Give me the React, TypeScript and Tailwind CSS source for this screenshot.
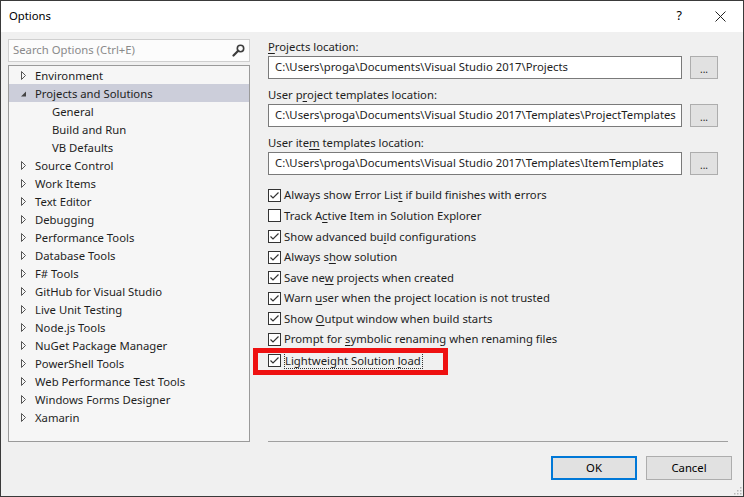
import React from 'react';

type TreeRow = {
  label: string;
  kind: 'collapsed' | 'expanded' | 'child';
  selected?: boolean;
};

const tree: TreeRow[] = [
  { label: 'Environment', kind: 'collapsed' },
  { label: 'Projects and Solutions', kind: 'expanded', selected: true },
  { label: 'General', kind: 'child' },
  { label: 'Build and Run', kind: 'child' },
  { label: 'VB Defaults', kind: 'child' },
  { label: 'Source Control', kind: 'collapsed' },
  { label: 'Work Items', kind: 'collapsed' },
  { label: 'Text Editor', kind: 'collapsed' },
  { label: 'Debugging', kind: 'collapsed' },
  { label: 'Performance Tools', kind: 'collapsed' },
  { label: 'Database Tools', kind: 'collapsed' },
  { label: 'F# Tools', kind: 'collapsed' },
  { label: 'GitHub for Visual Studio', kind: 'collapsed' },
  { label: 'Live Unit Testing', kind: 'collapsed' },
  { label: 'Node.js Tools', kind: 'collapsed' },
  { label: 'NuGet Package Manager', kind: 'collapsed' },
  { label: 'PowerShell Tools', kind: 'collapsed' },
  { label: 'Web Performance Test Tools', kind: 'collapsed' },
  { label: 'Windows Forms Designer', kind: 'collapsed' },
  { label: 'Xamarin', kind: 'collapsed' },
];

// label split as [before, accessKey, after]
const options: { parts: [string, string, string]; checked: boolean }[] = [
  { parts: ['Always show Error Lis', 't', ' if build finishes with errors'], checked: true },
  { parts: ['Track A', 'c', 'tive Item in Solution Explorer'], checked: false },
  { parts: ['Show advanced bu', 'i', 'ld configurations'], checked: true },
  { parts: ['Always s', 'h', 'ow solution'], checked: true },
  { parts: ['Save ne', 'w', ' projects when created'], checked: true },
  { parts: ['Warn ', 'u', 'ser when the project location is not trusted'], checked: true },
  { parts: ['Show ', 'O', 'utput window when build starts'], checked: true },
  { parts: ['Prompt for ', 's', 'ymbolic renaming when renaming files'], checked: true },
];

const locations: { label: [string, string, string]; value: string }[] = [
  { label: ['', 'P', 'rojects location:'], value: 'C:\\Users\\proga\\Documents\\Visual Studio 2017\\Projects' },
  { label: ['User p', 'r', 'oject templates location:'], value: 'C:\\Users\\proga\\Documents\\Visual Studio 2017\\Templates\\ProjectTemplates' },
  { label: ['User ite', 'm', ' templates location:'], value: 'C:\\Users\\proga\\Documents\\Visual Studio 2017\\Templates\\ItemTemplates' },
];

function Expander({ kind }: { kind: TreeRow['kind'] }) {
  if (kind === 'child') return null;
  if (kind === 'expanded') {
    return (
      <svg width="7" height="9" viewBox="0 0 7 9" className="shrink-0">
        <path d="M6 2.5 L6 7.5 L1 7.5 Z" fill="#444" />
      </svg>
    );
  }
  return (
    <svg width="7" height="9" viewBox="0 0 7 9" className="shrink-0">
      <path d="M1.5 0.5 L5.5 4.5 L1.5 8.5 Z" fill="none" stroke="#555" strokeWidth="1" />
    </svg>
  );
}

function CheckBox({ checked }: { checked: boolean }) {
  return (
    <span className="w-[13px] h-[13px] border border-[#333] bg-white shrink-0 flex items-center justify-center">
      {checked && (
        <svg width="11" height="11" viewBox="0 0 11 11">
          <path d="M1.5 5.5 L4 8 L9.5 2.5" fill="none" stroke="#333" strokeWidth="1.2" />
        </svg>
      )}
    </span>
  );
}

function AccessLabel({ parts }: { parts: [string, string, string] }) {
  return (
    <>
      {parts[0]}
      <span className="underline underline-offset-2">{parts[1]}</span>
      {parts[2]}
    </>
  );
}

export default function App() {
  return (
    <div className="w-[744px] h-[497px] border border-[#3a3a3a] bg-[#f0f0f0] flex flex-col text-[11.3px] text-[#1e1e1e] font-['Noto_Sans',sans-serif] relative overflow-hidden">
      {/* Title bar */}
      <div className="h-[31px] bg-white flex items-center shrink-0">
        <span className="pl-[8px] text-black">Options</span>
        <span className="ml-auto mr-[33px] text-[12.5px] text-black">?</span>
        <svg width="11" height="11" viewBox="0 0 11 11" className="mr-[17px]">
          <path d="M0.5 0.5 L10.5 10.5 M10.5 0.5 L0.5 10.5" stroke="#222" strokeWidth="1" />
        </svg>
      </div>

      {/* Body */}
      <div className="flex h-[411px] shrink-0">
        {/* Left column */}
        <div className="w-[249px] pl-[7px] pt-[7px] flex flex-col shrink-0">
          <div className="h-[23px] border border-[#cfcfcf] bg-[#fcfcfc] flex items-center pl-[4px] pr-[4px]">
            <span className="text-[#8a8a8a]">Search Options (Ctrl+E)</span>
            <svg width="13" height="13" viewBox="0 0 13 13" className="ml-auto">
              <circle cx="8.5" cy="4.5" r="3.2" fill="none" stroke="#3c3c3c" strokeWidth="1.6" />
              <path d="M6.2 6.8 L1.5 11.5" stroke="#3c3c3c" strokeWidth="2.2" strokeLinecap="round" />
            </svg>
          </div>
          <div className="mt-[3px] h-[377px] border border-[#9a9a9a] bg-[#f6f6f6]">
            {tree.map((row) => (
              <div
                key={row.label}
                className={
                  'h-[18px] flex items-center ' +
                  (row.selected ? 'bg-[#ccceda] ' : '') +
                  (row.kind === 'child' ? 'pl-[43px]' : 'pl-[11px] gap-[8px]')
                }
              >
                <Expander kind={row.kind} />
                <span className="leading-[18px] pt-[1px] whitespace-nowrap">{row.label}</span>
              </div>
            ))}
          </div>
        </div>

        {/* Right column */}
        <div className="ml-[18px] w-[460px] flex flex-col">
          <div className="w-[450px] pt-[7px]">
            {locations.map((loc) => (
              <div key={loc.value} className="h-[48px]">
                <div className="h-[17px] leading-[16px] whitespace-nowrap">
                  <AccessLabel parts={loc.label} />
                </div>
                <div className="flex gap-[8px]">
                  <div className="w-[414px] h-[23px] border border-[#7a7a7a] bg-white flex items-center pl-[6px] whitespace-nowrap overflow-hidden">
                    {loc.value}
                  </div>
                  <div className="w-[28px] h-[23px] border border-[#adadad] bg-[#e1e1e1] flex items-center justify-center text-[10px] leading-none pt-[3px]">
                    ...
                  </div>
                </div>
              </div>
            ))}

            <div className="mt-[2px]">
              {options.map((opt) => (
                <div key={opt.parts.join('')} className="h-[20.6px] flex items-center gap-[3px] whitespace-nowrap">
                  <CheckBox checked={opt.checked} />
                  <span className="pt-[1px]">
                    <AccessLabel parts={opt.parts} />
                  </span>
                </div>
              ))}
              <div className="h-[20.6px] flex items-center gap-[3px] whitespace-nowrap">
                <CheckBox checked />
                <span className="border border-dotted border-[#333] leading-[15px] pt-[1px] pr-[1px]">
                  Lightweight Solution <span className="underline underline-offset-2">l</span>oad
                </span>
              </div>
            </div>
          </div>
          <div className="mt-auto h-[1px] bg-[#a0a0a0] w-full mb-[1px]" />
        </div>
      </div>

      {/* Footer buttons */}
      <div className="flex justify-end gap-[9px] pr-[11px] pt-[13px]">
        <button className="w-[86px] h-[24px] border-2 border-[#0078d7] bg-[#e1e1e1] text-black">
          OK
        </button>
        <button className="w-[86px] h-[24px] border border-[#adadad] bg-[#e1e1e1] text-black">
          Cancel
        </button>
      </div>

      {/* Size grip */}
      <svg width="8" height="8" viewBox="0 0 8 8" className="absolute right-[1px] bottom-[1px]">
        <rect x="6" y="0" width="1.5" height="1.5" fill="#b8b8b8" />
        <rect x="3" y="3" width="1.5" height="1.5" fill="#b8b8b8" />
        <rect x="6" y="3" width="1.5" height="1.5" fill="#b8b8b8" />
        <rect x="0" y="6" width="1.5" height="1.5" fill="#b8b8b8" />
        <rect x="3" y="6" width="1.5" height="1.5" fill="#b8b8b8" />
        <rect x="6" y="6" width="1.5" height="1.5" fill="#b8b8b8" />
      </svg>

      {/* Red annotation box */}
      <div className="absolute left-[252px] top-[347px] w-[195px] h-[27px] border-[5px] border-[#ee1111] pointer-events-none" />
    </div>
  );
}
